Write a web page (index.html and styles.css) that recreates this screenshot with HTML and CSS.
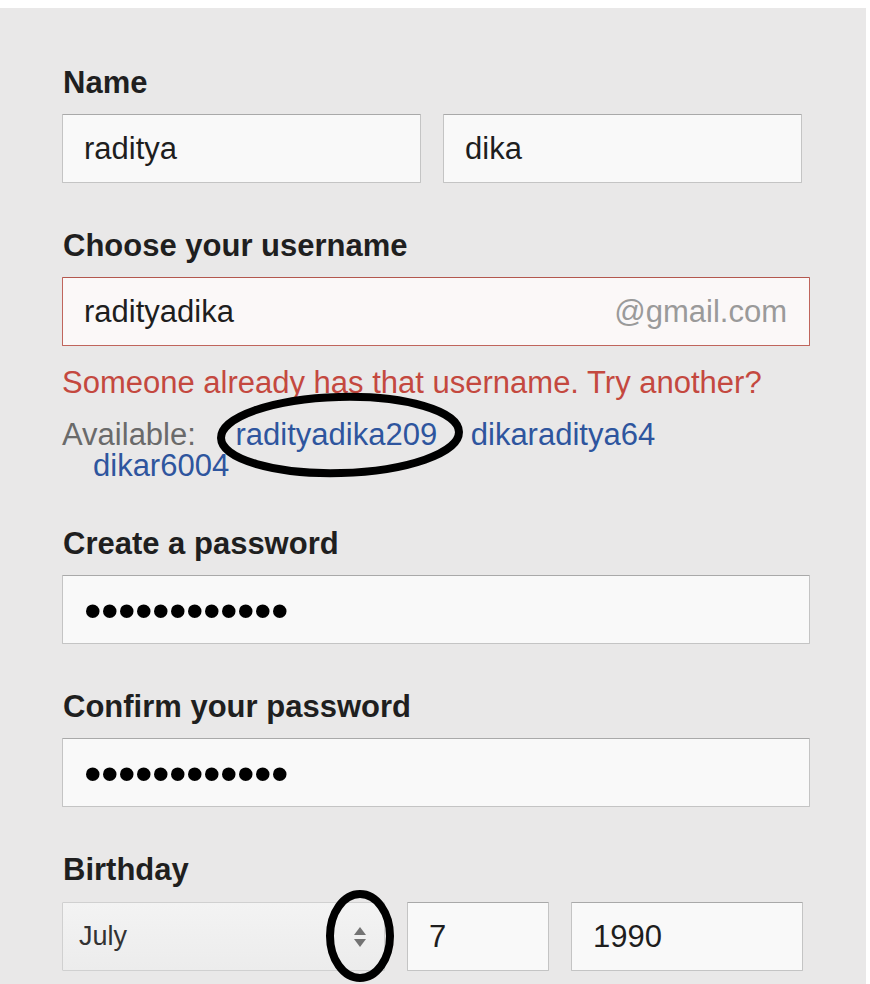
FILE: index.html
```html
<!DOCTYPE html>
<html lang="en">
<head>
<meta charset="utf-8">
<title>Create your Google Account</title>
<link rel="stylesheet" href="styles.css">
</head>
<body>
<div class="page">
  <form class="form">
    <div class="field field-name">
      <div class="label">Name</div>
      <div class="row">
        <div class="input half">raditya</div>
        <div class="input half">dika</div>
      </div>
    </div>

    <div class="field">
      <div class="label">Choose your username</div>
      <div class="input input-error">
        <span>radityadika</span>
        <span class="suffix">@gmail.com</span>
      </div>
      <p class="err">Someone already has that username. Try another?</p>
      <p class="avail"><span class="avail-label">Available:</span> <a class="sugg" href="#">radityadika209</a> <a class="sugg" href="#">dikaraditya64</a> <a class="sugg" href="#">dikar6004</a></p>
    </div>

    <div class="field">
      <div class="label">Create a password</div>
      <div class="input"><span class="dots">&#8226;&#8226;&#8226;&#8226;&#8226;&#8226;&#8226;&#8226;&#8226;&#8226;&#8226;&#8226;</span></div>
    </div>

    <div class="field">
      <div class="label">Confirm your password</div>
      <div class="input"><span class="dots">&#8226;&#8226;&#8226;&#8226;&#8226;&#8226;&#8226;&#8226;&#8226;&#8226;&#8226;&#8226;</span></div>
    </div>

    <div class="field field-birthday">
      <div class="label">Birthday</div>
      <div class="row">
        <div class="select">
          <span class="select-text">July</span>
          <svg class="select-arrows" width="14" height="22" viewBox="0 0 14 22"><path d="M7 1 L13 9 L1 9 Z" fill="#737373"/><path d="M1 13 L13 13 L7 21 Z" fill="#737373"/></svg>
        </div>
        <div class="input day">7</div>
        <div class="input year">1990</div>
      </div>
    </div>
  </form>

  <svg class="annot" width="870" height="976" viewBox="0 8 870 976">
    <ellipse cx="340" cy="435" rx="119" ry="38" fill="none" stroke="#000" stroke-width="8" transform="rotate(-1.5 340 435)"/>
    <ellipse cx="360" cy="936" rx="30" ry="42" fill="none" stroke="#000" stroke-width="8"/>
  </svg>
</div>
</body>
</html>
```

FILE: styles.css
```css
* { box-sizing: border-box; }

html, body {
  margin: 0;
  padding: 0;
  background: #ffffff;
}

body {
  font-family: "Liberation Sans", Arial, sans-serif;
  color: #222222;
}

.page {
  position: relative;
  margin-top: 8px;
  margin-right: 4px;
  height: 976px;
  background: #e9e8e8;
  overflow: hidden;
}

.form {
  padding: 57px 0 0 62px;
  width: 810px;
}

.field {
  margin-top: 45px;
}

.field-name {
  margin-top: 0;
}

.label {
  font-size: 31px;
  line-height: 36px;
  font-weight: bold;
  color: #1f1f1f;
  margin-bottom: 13px;
  padding-left: 1px;
}

.row {
  display: flex;
  gap: 22px;
}

.input {
  height: 69px;
  background: #f9f9f9;
  border: 1px solid #c4c4c4;
  border-top-color: #a9a9a9;
  border-radius: 1px;
  display: flex;
  align-items: center;
  justify-content: space-between;
  padding: 0 22px 0 21px;
  font-size: 31px;
  color: #1e1e1e;
  width: 748px;
}

.half {
  width: 359px;
}

.input-error {
  border-color: #c0655c;
  border-top-color: #b3574e;
  background: #fbf8f8;
}

.suffix {
  color: #9a9a9a;
}

.err {
  margin: 21px 0 0 0;
  font-size: 31px;
  line-height: 31px;
  color: #c4483f;
}

.avail {
  margin: 21px 0 0 0;
  width: 700px;
  padding-left: 6px;
  text-indent: -6px;
  font-size: 31px;
  line-height: 31px;
  color: #6a6a6a;
}

.avail-label {
  margin-right: 6px;
}

.sugg {
  color: #2e559e;
  text-decoration: none;
  margin-left: 25px;
}

.dots {
  font-size: 50px;
  letter-spacing: -0.5px;
  color: #000;
  line-height: 1;
  position: relative;
  top: 1px;
}

.field-birthday .label {
  margin-bottom: 14px;
}

.select {
  width: 323px;
  height: 69px;
  background: linear-gradient(#f3f3f3, #ececec);
  border: 1px solid #d0d0d0;
  border-radius: 1px;
  display: flex;
  align-items: center;
  justify-content: space-between;
  padding: 0 17px 0 16px;
}

.select-text {
  font-size: 27px;
  color: #333;
}

.select-arrows {
  display: block;
}

.day {
  width: 142px;
}

.year {
  width: 232px;
}

.annot {
  position: absolute;
  left: 0;
  top: 0;
  pointer-events: none;
}
```
